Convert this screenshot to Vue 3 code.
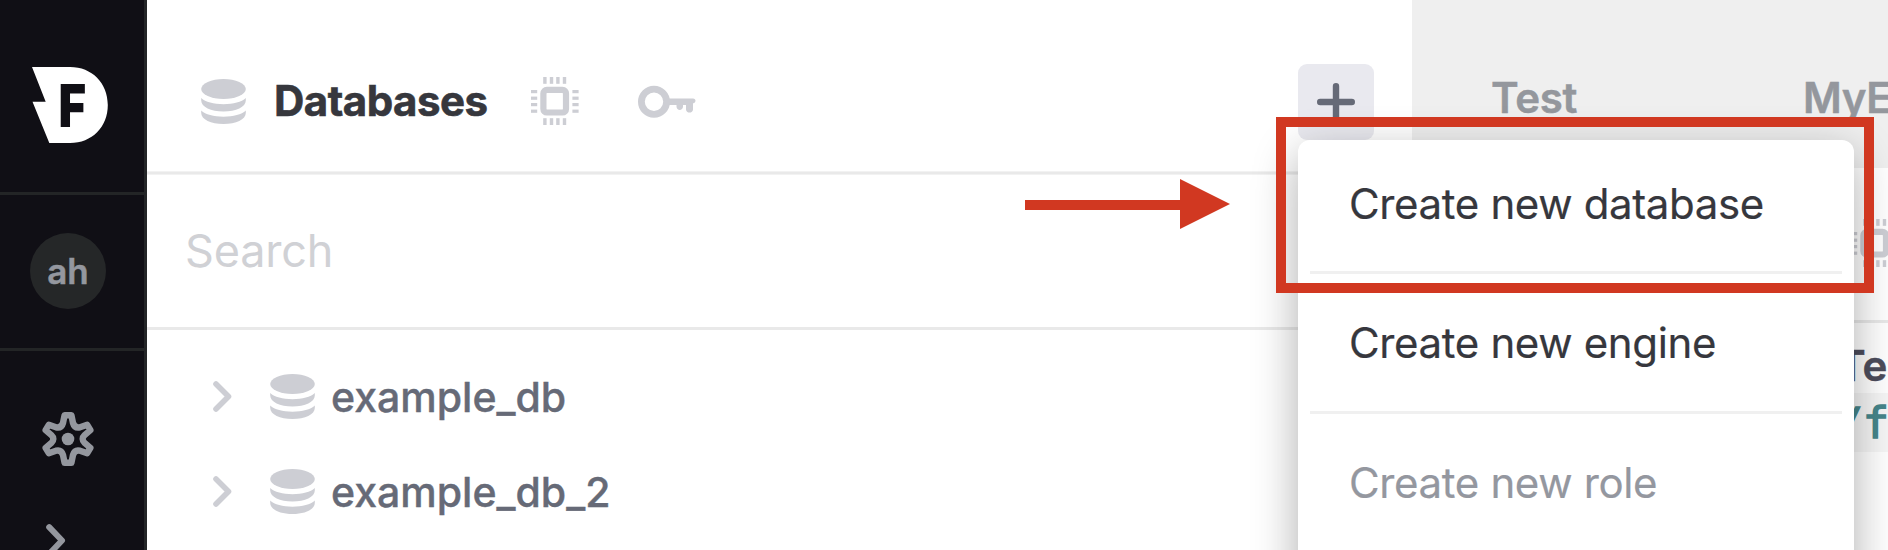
<script setup>
import { h } from 'vue'

const databases = ['example_db', 'example_db_2']
const menuItems = [
  { label: 'Create new database', disabled: false },
  { label: 'Create new engine', disabled: false },
  { label: 'Create new role', disabled: true },
]

const DbIcon = () =>
  h('svg', { width: 45, height: 45, viewBox: '0 0 45 45', fill: '#cdced4' }, [
    h('ellipse', { cx: 22.5, cy: 10, rx: 22.3, ry: 10 }),
    h('path', { d: 'M.2 19C4.500 23 12.500 25.200 22.500 25.200S40.500 23 44.800 19V21.500C44.800 28 35 32.500 22.500 32.500S.2 28 .2 21.500Z' }),
    h('path', { d: 'M.2 31.500C4.500 35.500 12.500 37.700 22.500 37.700S40.500 35.500 44.800 31.500V34C44.800 40.500 35 45 22.500 45S.2 40.500 .2 34Z' }),
  ])

const ticks = [12.2, 18.8, 25.2, 31.8]
const ChipIcon = () =>
  h('svg', { width: 48, height: 48, viewBox: '0 0 48 48', fill: '#cdced4' }, [
    h('rect', { x: 12.4, y: 12.9, width: 22.6, height: 22.6, rx: 3.5, fill: 'none', stroke: '#cdced4', 'stroke-width': 6.2 }),
    ...ticks.flatMap((t) => [
      h('rect', { x: t, y: 0, width: 3.4, height: 6.8 }),
      h('rect', { x: t, y: 41.2, width: 3.4, height: 6.8 }),
      h('rect', { x: 0, y: t + 0.8, width: 6.2, height: 3.2 }),
      h('rect', { x: 41.4, y: t + 0.8, width: 6.2, height: 3.2 }),
    ]),
  ])
</script>

<template>
  <div class="app">
    <nav class="sidebar">
      <div class="brand">
        <svg width="76" height="76" viewBox="0 0 76 76">
          <path fill="#fff" d="M0 0H38C60 0 75.800 16 75.800 38S60 76 38 76H17.300L.5 34.700H13.700Z" />
          <text class="brand-letter" transform="translate(26.600 60) scale(.8 1)">F</text>
        </svg>
      </div>
      <div class="rule"></div>
      <div class="account"><div class="avatar">ah</div></div>
      <div class="rule"></div>
      <div class="tools">
        <svg width="52" height="54" viewBox="0 0 52 54">
          <path
            fill="none" stroke="#94979e" stroke-width="6.400" stroke-linejoin="round"
            d="M22.600 3.200H29.400L31 11C32 14.500 34.500 16 38 15.300L45.200 12.800L48.400 18.200L42.600 23.200C40 25.600 40 28.400 42.600 30.800L48.400 35.800L45.200 41.200L38 38.700C34.500 38 32 39.500 31 43L29.400 50.800H22.600L21 43C20 39.500 17.500 38 14 38.700L6.800 41.200L3.600 35.800L9.400 30.800C12 28.400 12 25.600 9.400 23.200L3.600 18.200L6.800 12.800L14 15.300C17.500 16 20 14.500 21 11Z"
          />
          <circle cx="26" cy="27" r="6.300" fill="#94979e" />
        </svg>
        <svg class="expand" width="20" height="34" viewBox="0 0 20 34">
          <path d="M3.200 3.200L16 16.500L3.200 30" fill="none" stroke="#94979e" stroke-width="6" stroke-linecap="round" stroke-linejoin="round" />
        </svg>
      </div>
    </nav>

    <section class="explorer">
      <header class="explorer-head">
        <DbIcon />
        <h1>Databases</h1>
        <ChipIcon class="engine-tab" />
        <svg class="key" width="58" height="34" viewBox="0 0 58 34">
          <circle cx="16" cy="16.800" r="12.600" fill="none" stroke="#cdced4" stroke-width="6.800" />
          <path fill="#cdced4" d="M30 13.500H55Q57.500 13.500 57.500 16Q57.500 17.600 55 18.500V24.500C55 28.600 48 28.600 48 24.500V20H45V21.500C45 26 38.500 26 38.500 21.500V20H30Z" />
        </svg>
        <button class="add">
          <svg width="40" height="40" viewBox="0 0 40 40">
            <path d="M20 4.200V35.800M4.200 20H35.800" stroke="#666a77" stroke-width="6.400" stroke-linecap="round" />
          </svg>
        </button>
      </header>
      <div class="line soft"></div>
      <div class="search">Search</div>
      <div class="line"></div>
      <ul class="tree">
        <li v-for="name in databases" :key="name">
          <svg width="19" height="31" viewBox="0 0 19 31">
            <path d="M3 3L15.500 15.500L3 28" fill="none" stroke="#cdced4" stroke-width="5.600" stroke-linecap="round" stroke-linejoin="round" />
          </svg>
          <DbIcon class="tree-db" />
          <span>{{ name }}</span>
        </li>
      </ul>
    </section>

    <main class="editor">
      <div class="tabs"><span class="tab">Test</span><span class="tab">MyE</span></div>
      <div class="toolbar"><ChipIcon /></div>
      <div class="line editor-line"></div>
      <div class="doc-title">Te</div>
      <div class="code">/f</div>
    </main>

    <div class="menu">
      <div v-for="item in menuItems" :key="item.label" class="menu-item" :class="{ disabled: item.disabled }">
        {{ item.label }}
      </div>
    </div>
    <div class="highlight"></div>
    <svg class="arrow" width="205" height="50" viewBox="0 0 205 50">
      <path fill="#d13821" d="M0 21H155V0L205 25L155 50V31H0Z" />
    </svg>
  </div>
</template>

<style>
body { overflow: hidden; }
</style>

<style scoped>
* { box-sizing: border-box; }
.app {
  position: relative;
  display: flex;
  width: 1888px;
  height: 550px;
  overflow: hidden;
  background: #fff;
  font-family: Inter, "Liberation Sans", sans-serif;
  font-size: 42px;
  white-space: nowrap;
}
svg { display: block; flex: none; }
.sidebar {
  flex: none;
  width: 147px;
  border-right: 3px solid #232527;
  background: #100f15;
}
.brand { height: 192px; padding: 67px 0 0 32px; }
.brand-letter { font-size: 59px; font-weight: 900; fill: #100f15; }
.rule { height: 3px; background: #232526; }
.account { height: 153px; padding: 38px 0 0 30px; }
.avatar {
  width: 76px;
  height: 76px;
  border-radius: 50%;
  background: #252728;
  color: #94979f;
  font-size: 35px;
  font-weight: 600;
  line-height: 76px;
  text-align: center;
  -webkit-text-stroke: .5px currentColor;
}
.tools { padding: 61px 0 0 42px; }
.expand { margin: 58px 0 0 4px; }
.explorer { flex: none; width: 1265px; }
.explorer-head {
  display: flex;
  align-items: center;
  height: 171px;
  padding: 32px 38px 0 54px;
}
h1 {
  width: 215px;
  margin: 0 0 2px 28px;
  color: #36373d;
  font-size: 42px;
  font-weight: 700;
  line-height: 50px;
  letter-spacing: -.5px;
  -webkit-text-stroke: .6px currentColor;
}
.engine-tab { margin: -2px 0 0 42px; }
.key { margin-left: 59px; }
.add {
  width: 76px;
  height: 76px;
  margin-left: auto;
  padding: 18px;
  border: 0;
  border-radius: 9px;
  background: #e9e9ef;
}
.line { height: 3px; background: #e9e9e9; }
.line.soft { height: 4px; border: solid #f2f2f2; border-width: 1px 0; }
.search {
  height: 152px;
  padding-left: 38px;
  color: #d0d1d5;
  font-size: 45px;
  line-height: 152px;
  letter-spacing: -.2px;
}
.tree { margin: 0; padding: 19px 0 0 66px; list-style: none; }
.tree li {
  display: flex;
  align-items: center;
  height: 95px;
  color: #666a77;
  font-size: 41px;
  font-weight: 500;
  -webkit-text-stroke: .4px currentColor;
}
.tree-db { margin: 0 16px 0 38px; }
.editor { flex: 1; min-width: 0; }
.tabs {
  display: flex;
  height: 168px;
  padding: 73px 0 0 79px;
  overflow: hidden;
  background: #efefef;
  color: #94979d;
  font-weight: 600;
  line-height: 50px;
  letter-spacing: -.3px;
  -webkit-text-stroke: .5px currentColor;
}
.tab { flex: none; width: 312px; }
.tab:last-child { width: auto; }
.toolbar { height: 152px; padding: 51px 0 0 439px; overflow: hidden; }
.editor-line { height: 3px; }
.doc-title {
  height: 70px;
  padding-left: 426px;
  overflow: hidden;
  color: #4d4d5c;
  font-weight: 600;
  line-height: 86px;
  -webkit-text-stroke: .5px currentColor;
}
.code {
  height: 59px;
  padding-left: 425px;
  overflow: hidden;
  background: #f6f6f6;
  color: #46868b;
  font-family: "DejaVu Sans Mono", monospace;
  font-size: 43px;
  line-height: 60px;
  -webkit-text-stroke: 1.600px currentColor;
}
.menu {
  position: absolute;
  top: 140px;
  left: 1298px;
  width: 556px;
  height: 560px;
  padding: 0 12px;
  border-radius: 12px;
  background: #fff;
  box-shadow: 0 14px 46px rgba(0, 0, 0, .32);
}
.menu-item {
  height: 140px;
  padding: 0 39px;
  border-bottom: 3px solid #f0f0f0;
  color: #36373d;
  line-height: 137px;
  letter-spacing: -.36px;
  -webkit-text-stroke: .2px currentColor;
}
.menu-item:first-child { height: 134px; line-height: 128px; }
.menu-item.disabled { color: #94979f; }
.highlight {
  position: absolute;
  top: 117px;
  left: 1276px;
  width: 598px;
  height: 176px;
  border: 10px solid #d13821;
}
.arrow { position: absolute; top: 179px; left: 1025px; }
</style>
